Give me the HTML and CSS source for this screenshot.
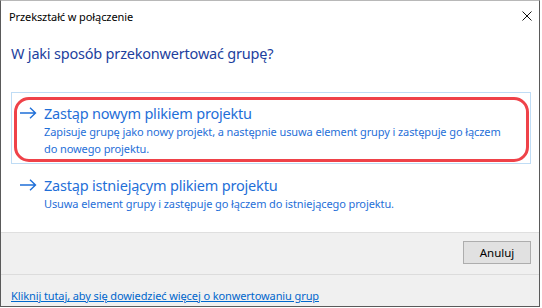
FILE: index.html
```html
<!DOCTYPE html>
<html lang="pl">
<head>
<meta charset="utf-8">
<title>Przekształć w połączenie</title>
<link rel="stylesheet" href="styles.css">
</head>
<body>
<div class="window">
  <div class="titlebar">
    <span class="title">Przekształć w połączenie</span>
    <svg class="close" width="10" height="10" viewBox="0 0 10 10"><path d="M0.5 0.5L9.5 9.5M9.5 0.5L0.5 9.5" stroke="#111" stroke-width="1"/></svg>
  </div>
  <div class="content">
    <h1 class="heading">W jaki sposób przekonwertować grupę?</h1>
    <div class="option selected">
      <svg class="arrow" width="17" height="12" viewBox="0 0 17 12"><path d="M0 6H15.5M10 0.7L15.5 6L10 11.3" fill="none" stroke="#1f6fd8" stroke-width="1.4"/></svg>
      <div class="texts">
        <div class="otitle">Zastąp nowym plikiem projektu</div>
        <div class="odesc">Zapisuje grupę jako nowy projekt, a następnie usuwa element grupy i zastępuje go łączem do nowego projektu.</div>
      </div>
      <div class="highlight"></div>
    </div>
    <div class="option second">
      <svg class="arrow" width="17" height="12" viewBox="0 0 17 12"><path d="M0 6H15.5M10 0.7L15.5 6L10 11.3" fill="none" stroke="#1f6fd8" stroke-width="1.4"/></svg>
      <div class="texts">
        <div class="otitle">Zastąp istniejącym plikiem projektu</div>
        <div class="odesc">Usuwa element grupy i zastępuje go łączem do istniejącego projektu.</div>
      </div>
    </div>
  </div>
  <div class="buttons">
    <button class="btn">Anuluj</button>
  </div>
  <div class="footer">
    <a class="link" href="#">Kliknij tutaj, aby się dowiedzieć więcej o konwertowaniu grup</a>
  </div>
</div>
</body>
</html>
```

FILE: styles.css
```css
html, body {
  margin: 0;
  padding: 0;
  background: #ffffff;
}
body {
  font-family: "Noto Sans", "Open Sans", sans-serif;
  width: 542px;
  height: 308px;
  overflow: hidden;
}
.window {
  box-sizing: border-box;
  width: 540px;
  height: 307px;
  border: 1px solid #5a5a5a;
  border-top-color: #b8b8b8;
  background: #ffffff;
  display: flex;
  flex-direction: column;
}
.titlebar {
  height: 30px;
  display: flex;
  align-items: center;
  justify-content: space-between;
  padding: 0 7px 0 8px;
}
.title {
  font-size: 11px;
  color: #000;
  letter-spacing: -0.1px;
}
.close {
  display: block;
}
.content {
  flex: 1;
  padding: 0 8px 0 10px;
}
.heading {
  margin: 11px 0 0 0;
  font-size: 14.5px;
  font-weight: normal;
  color: #1d3f9e;
  letter-spacing: -0.2px;
  height: 50px;
  line-height: 22px;
}
.option {
  position: relative;
  display: flex;
  align-items: flex-start;
  padding: 10px 8px 10px 8px;
  border: 1px solid transparent;
  width: 520px;
  box-sizing: border-box;
}
.option.selected {
  border-color: #bfdcf5;
  height: 72px;
}
.arrow {
  flex: none;
  margin-top: 4px;
  margin-right: 7px;
}
.otitle {
  font-size: 14.5px;
  color: #1f6fd8;
  line-height: 20px;
  letter-spacing: -0.2px;
}
.odesc {
  font-size: 11px;
  color: #1f6fd8;
  line-height: 17px;
  letter-spacing: -0.1px;
  max-width: 470px;
}
.option.second {
  padding-top: 10px;
}
.highlight {
  position: absolute;
  left: 2px;
  top: 4px;
  right: 1px;
  bottom: 1px;
  border: 3px solid #ef4249;
  border-radius: 15px;
  pointer-events: none;
}
.buttons {
  background: #f0f0f0;
  border-top: 1px solid #dfdfdf;
  height: 42px;
  flex: none;
  box-sizing: border-box;
  display: flex;
  justify-content: flex-end;
  align-items: flex-start;
  padding: 8px 8px 0 0;
}
.btn {
  width: 68px;
  height: 23px;
  border: 1px solid #adadad;
  background: #e1e1e1;
  font-family: "Noto Sans", "Open Sans", sans-serif;
  font-size: 11.5px;
  color: #000;
  padding: 0;
}
.footer {
  background: #f0f0f0;
  border-top: 1px solid #dcdcdc;
  height: 32px;
  flex: none;
  box-sizing: border-box;
  padding: 8px 10px 0 10px;
}
.link {
  font-size: 11px;
  color: #0066cc;
  text-decoration: underline;
  letter-spacing: -0.1px;
}
```
